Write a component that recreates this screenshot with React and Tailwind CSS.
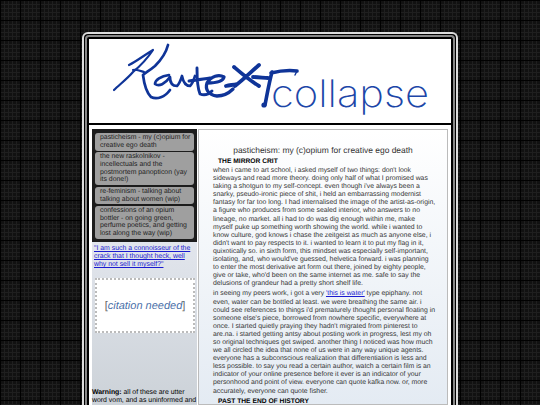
const posts = [
  'pasticheism - my (c)opium for creative ego death',
  'the new raskolnikov - incellectuals and the postmortem panopticon (yay its done!)',
  're-feminism - talking about talking about women (wip)',
  'confessions of an opium bottler - on going green, perfume poetics, and getting lost along the way (wip)',
];

const para1 = [
  "when i came to art school, i asked myself of two things: don't look",
  'sideways and read more theory. doing only half of what I promised was',
  "taking a shotgun to my self-concept. even though i've always been a",
  'snarky, pseudo-ironic piece of shit, i held an embarrassing modernist',
  'fantasy for far too long. I had internalised the image of the artist-as-origin,',
  'a figure who produces from some sealed interior, who answers to no',
  'lineage, no market. all i had to do was dig enough within me, make',
  'myself puke up something worth showing the world. while i wanted to',
  'know culture, god knows i chase the zeitgeist as much as anyone else, i',
  "didn't want to pay respects to it. i wanted to learn it to put my flag in it,",
  'quixotically so. in sixth form, this mindset was especially self-important,',
  "isolating, and, who would've guessed, helvetica forward. i was planning",
  'to enter the most derivative art form out there, joined by eighty people,',
  "give or take, who'd been on the same internet as me. safe to say the",
  'delusions of grandeur had a pretty short shelf life.',
];

const para2 = [
  'even, water can be bottled at least. we were breathing the same air. i',
  "could see references to things i'd prematurely thought personal floating in",
  "someone else's piece, borrowed from nowhere specific, everywhere at",
  "once. I started quietly praying they hadn't migrated from pinterest to",
  'are.na. i started getting antsy about posting work in progress, lest my oh',
  'so original techniques get swiped. another thing I noticed was how much',
  'we all circled the idea that none of us were in any way unique agents.',
  'everyone has a subconscious realization that differentiation is less and',
  'less possible. to say you read a certain author, watch a certain film is an',
  'indicator of your online presence before it ever is an indicator of your',
  'personhood and point of view. everyone can quote kafka now. or, more',
  'accurately, everyone can quote fisher.',
];

function Logo() {
  return (
    <svg viewBox="0 0 362 84" className="block h-full w-full">
      <g fill="none" stroke="#0f3498" strokeLinecap="round" strokeLinejoin="round">
        <path strokeWidth="2.2" d="M40 26 C48 22 54 17 64 11 C58 20 50 28 44 33 C38 40 30 46 25 51 M44 31 C47 30 52 32 55 33" />
        <path strokeWidth="2.7" d="M79 6 C77 14 74 19 66 27 C60 32 56 34 54 36 C55 44 58 54 62 58 C68 61 76 58 81 51" />
        <path strokeWidth="2.7" d="M80 36 C72 37 66 41 66 45 C70 48 76 45 81 38 C81 44 83 47 88 47 C91 44 92 40 93 37 C94 42 96 47 101 47 C104 44 105 40 106 37" />
        <path strokeWidth="2.9" d="M108 29 C108 38 108 48 111 55 C116 57 120 55 123 52 M100 42 C108 41 114 40 121 39" />
        <path strokeWidth="3.3" d="M118 44 C126 44 134 43 135 38 C130 35 122 37 118 44 C116 50 119 56 128 57 C134 57 140 54 144 50" />
        <path strokeWidth="3.8" d="M145 28 C152 34 160 41 170 47 M170 26 C162 33 154 41 146 47 M137 47 C141 46 144 46 148 45 M164 38 C170 38 175 39 179 39" />
        <path strokeWidth="3.6" d="M183 33 C180 44 178 56 176 66 M182 34 C190 32 200 31 208 32" />
        <path strokeWidth="1.4" d="M208 32 L206 36" />
      </g>
      <circle cx="175" cy="66" r="2.6" fill="#0f3498" />
      <text x="182" y="68" fill="#1c46a8" fontFamily="Inter, 'Liberation Sans', sans-serif" fontWeight="200" fontSize="38" textLength="158" lengthAdjust="spacingAndGlyphs">collapse</text>
    </svg>
  );
}

export default function App() {
  return (
    <div className="h-[405px] w-[540px] overflow-hidden bg-[#111] bg-[linear-gradient(#000_1px,transparent_1px),linear-gradient(90deg,#000_1px,transparent_1px),linear-gradient(#1f1f1f_1px,transparent_1px),linear-gradient(90deg,#1f1f1f_1px,transparent_1px)] bg-[length:20px_20px,20px_20px,4px_4px,4px_4px] pl-[82px] pt-8 font-['Liberation_Sans',Arial,sans-serif] [text-rendering:geometricPrecision]">
      <div className="w-[376px] rounded-t-md border-2 border-b-0 border-[#ddd] bg-black p-px">
        <div className="rounded-t-[4px] border-2 border-b-0 border-[#888] bg-black p-[2px]">
          <div className="h-[84px] bg-white">
            <Logo />
          </div>
          <div className="mt-[2px] flex h-[280px] gap-px bg-white pl-[3px] pr-[3px] pt-[4px]">
            <aside className="w-[105px] shrink-0 bg-gradient-to-b from-[#f1f3fb] to-[#ccd2d8] text-[6.9px] leading-[8px]">
              <nav className="flex flex-col gap-[1.5px] bg-[#1c1c1c] px-[3px] pb-[3px] pt-[4px] leading-[7.8px]">
                {posts.map((p) => (
                  <a key={p} className="rounded-[3px] bg-[#9f9f9f] py-px pl-[5px] pr-[2px] text-[#222]">{p}</a>
                ))}
              </nav>
              <a className="mt-[3px] block px-[2px] text-[#1a1ad0] underline">
                "I am such a connoisseur of the crack that I thought heck, well why not sell it myself?"
              </a>
              <div className="ml-[3px] mt-[9px] flex h-[55px] w-[100px] items-center justify-center border-2 border-dotted border-[#bbb] bg-white text-[11px] italic text-[#4a6fa8]">
                <span><span className="not-italic text-[#666]">[</span>citation needed<span className="not-italic text-[#666]">]</span></span>
              </div>
              <p className="mt-[56px] text-black"><b>Warning:</b> all of these are utter word vom, and as uninformed and</p>
            </aside>
            <main className="min-w-0 flex-1 whitespace-nowrap border border-[#bbb] bg-gradient-to-b from-white to-[#e4ebf3] pl-[14px] pr-[10px] pt-[15px] text-[6.85px] leading-[8.1px] text-[#333]">
              <h1 className="pr-[4px] text-center text-[8.45px] leading-[11px] font-normal">pasticheism: my (c)opium for creative ego death</h1>
              <h2 className="mt-[1px] pl-[5px] text-[6.7px] leading-[10px] font-bold text-black">THE MIRROR CRIT</h2>
              <p>
                {para1.map((line) => (
                  <span key={line} className="block">{line}</span>
                ))}
              </p>
              <p className="mt-[2px]">
                <span className="block">in seeing my peers work, i got a very <a className="text-[#1a1ad0] underline">'this is water'</a> type epiphany. not</span>
                {para2.map((line) => (
                  <span key={line} className="block">{line}</span>
                ))}
              </p>
              <h2 className="mt-[1px] pl-[5px] text-[6.7px] leading-[10px] font-bold text-black">PAST THE END OF HISTORY</h2>
            </main>
          </div>
        </div>
      </div>
    </div>
  );
}
